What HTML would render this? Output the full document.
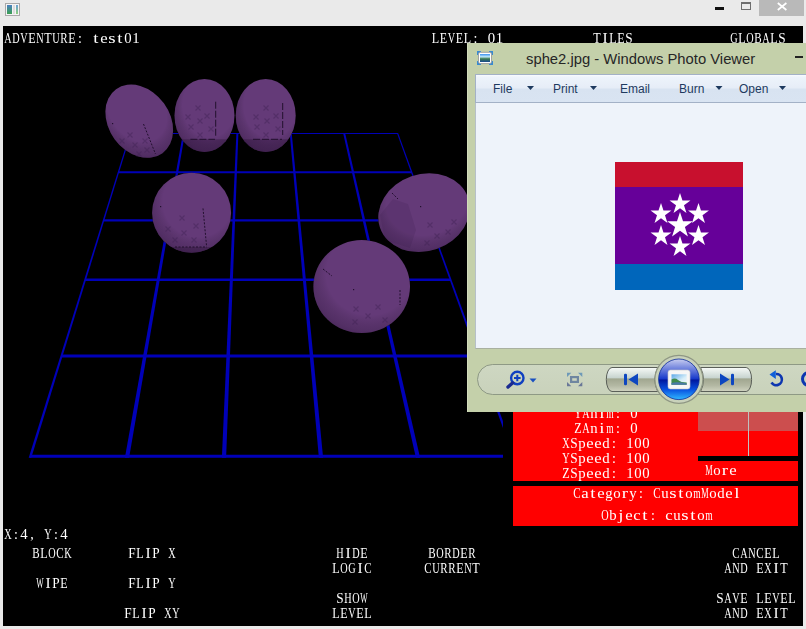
<!DOCTYPE html>
<html><head><meta charset="utf-8">
<style>
*{margin:0;padding:0;box-sizing:border-box}
html,body{width:806px;height:629px;overflow:hidden;background:#eaeaea;position:relative}
.a{position:absolute}
.m{position:absolute;font:13.333px/15px "Liberation Mono",monospace;color:#fff;white-space:pre}
.c{text-align:center}
.s{font-family:"Liberation Sans",sans-serif;white-space:pre;position:absolute}
</style></head><body>
<!-- title icon -->
<div class="a" style="left:5px;top:3px;width:15px;height:13px;border:1px solid #a9a9a9;background:#f4f4f4"></div>
<div class="a" style="left:7px;top:5px;width:5px;height:9px;background:linear-gradient(#4a7fc0,#3aa050)"></div>
<div class="a" style="left:13px;top:5px;width:2px;height:9px;background:#ddd"></div>
<div class="a" style="left:16px;top:5px;width:2px;height:9px;background:linear-gradient(#6aa0d8,#8cd07a)"></div>
<!-- controls -->
<div class="a" style="left:715px;top:7px;width:9px;height:3px;background:#111"></div>
<div class="a" style="left:741px;top:2px;width:10px;height:8px;border:1px solid #6e6e6e;border-top-width:2px"></div>
<div class="a" style="left:759px;top:0;width:45px;height:16px;background:#b9b9b9"></div>
<svg class="a" style="left:775px;top:0" width="14" height="14"><path d="M2.8 3 L11.4 10 M11.4 3 L2.8 10" stroke="#fff" stroke-width="1.7"/></svg>
<!-- client -->
<div class="a" style="left:3px;top:26px;width:800px;height:600px;background:#000"></div>
<svg class="a" style="left:0;top:0" width="806" height="629">
<defs>
<clipPath id="c2"><ellipse cx="204.5" cy="115.5" rx="30" ry="36.5"/></clipPath>
<clipPath id="c3"><ellipse cx="265.7" cy="115.5" rx="30" ry="36.5"/></clipPath>
<clipPath id="c4"><ellipse cx="191.6" cy="212.8" rx="39.5" ry="40"/></clipPath>
<clipPath id="vp"><rect x="3" y="26" width="500" height="600"/></clipPath>
<radialGradient id="sh" cx="0.58" cy="0.36" r="0.72">
<stop offset="0" stop-color="#000" stop-opacity="0"/><stop offset="0.62" stop-color="#000" stop-opacity="0"/><stop offset="0.85" stop-color="#1a0a25" stop-opacity="0.22"/><stop offset="1" stop-color="#1a0a25" stop-opacity="0.4"/>
</radialGradient>
</defs>
<g clip-path="url(#vp)">
<g fill="#0000b8">
<polygon points="130.8,133.0 397.3,133.0 397.7,134.0 130.4,134.0"/>
<polygon points="118.9,171.2 411.2,171.2 412.0,173.2 118.2,173.2"/>
<polygon points="103.9,219.2 428.7,219.2 429.5,221.4 103.2,221.4"/>
<polygon points="85.4,278.5 450.3,278.5 451.2,281.1 84.6,281.1"/>
<polygon points="61.7,354.6 478.0,354.6 479.1,357.6 60.8,357.6"/>
<polygon points="30.5,454.8 514.5,454.8 515.5,457.8 29.5,457.8"/>
<polygon points="130.0,133.0 131.2,133.0 31.3,457.8 28.7,457.8"/>
<polygon points="183.0,133.0 185.0,133.0 129.1,457.8 124.9,457.8"/>
<polygon points="236.4,133.0 238.4,133.0 226.1,457.8 221.9,457.8"/>
<polygon points="289.7,133.0 291.7,133.0 323.1,457.8 318.9,457.8"/>
<polygon points="343.1,133.0 345.1,133.0 420.1,457.8 415.9,457.8"/>
<polygon points="396.9,133.0 398.1,133.0 516.3,457.8 513.7,457.8"/>
</g>
<g id="sph">
<ellipse cx="139.25" cy="121.2" rx="30.5" ry="39.5" transform="rotate(-36 139.25 121.2)"/>
<ellipse cx="204.5" cy="115.5" rx="30" ry="36.5"/>
<ellipse cx="265.7" cy="115.5" rx="30" ry="36.5"/>
<ellipse cx="191.6" cy="212.8" rx="39.5" ry="40"/>
<ellipse cx="424" cy="212.7" rx="46.5" ry="38.5" transform="rotate(-19 424 212.7)"/>
<ellipse cx="361.7" cy="286.6" rx="48.3" ry="46.5"/>
</g>
<use href="#sph" fill="#643a78"/>
<g fill="#1e0a2a" opacity="0.3">
<rect x="170" y="139.3" width="70" height="20" clip-path="url(#c2)"/>
<rect x="232" y="139.3" width="70" height="20" clip-path="url(#c3)"/>
<rect x="150" y="247" width="90" height="10" clip-path="url(#c4)"/>
</g>
<use href="#sph" fill="url(#sh)"/>
<path d="M127.5 132.5L132.5 137.5M132.5 132.5L127.5 137.5 M119.5 138.5L124.5 143.5M124.5 138.5L119.5 143.5 M142.5 138.5L147.5 143.5M147.5 138.5L142.5 143.5 M132.5 142.5L137.5 147.5M137.5 142.5L132.5 147.5 M144.5 147.5L149.5 152.5M149.5 147.5L144.5 152.5 M136.5 151.5L141.5 156.5M141.5 151.5L136.5 156.5 M195.5 105.5L200.5 110.5M200.5 105.5L195.5 110.5 M185.5 114.5L190.5 119.5M190.5 114.5L185.5 119.5 M204.5 113.5L209.5 118.5M209.5 113.5L204.5 118.5 M197.5 118.5L202.5 123.5M202.5 118.5L197.5 123.5 M188.5 124.5L193.5 129.5M193.5 124.5L188.5 129.5 M208.5 126.5L213.5 131.5M213.5 126.5L208.5 131.5 M197.5 132.5L202.5 137.5M202.5 132.5L197.5 137.5 M263.5 105.5L268.5 110.5M268.5 105.5L263.5 110.5 M253.5 114.5L258.5 119.5M258.5 114.5L253.5 119.5 M273.5 113.5L278.5 118.5M278.5 113.5L273.5 118.5 M264.5 118.5L269.5 123.5M269.5 118.5L264.5 123.5 M254.5 124.5L259.5 129.5M259.5 124.5L254.5 129.5 M275.5 126.5L280.5 131.5M280.5 126.5L275.5 131.5 M263.5 132.5L268.5 137.5M268.5 132.5L263.5 137.5 M179.5 215.5L184.5 220.5M184.5 215.5L179.5 220.5 M165.5 226.5L170.5 231.5M170.5 226.5L165.5 231.5 M193.5 223.5L198.5 228.5M198.5 223.5L193.5 228.5 M181.5 230.5L186.5 235.5M186.5 230.5L181.5 235.5 M172.5 237.5L177.5 242.5M177.5 237.5L172.5 242.5 M191.5 237.5L196.5 242.5M196.5 237.5L191.5 242.5 M427.5 222.5L432.5 227.5M432.5 222.5L427.5 227.5 M451.5 219.5L456.5 224.5M456.5 219.5L451.5 224.5 M445.5 229.5L450.5 234.5M450.5 229.5L445.5 234.5 M434.5 233.5L439.5 238.5M439.5 233.5L434.5 238.5 M424.5 240.5L429.5 245.5M429.5 240.5L424.5 245.5 M353.5 306.5L358.5 311.5M358.5 306.5L353.5 311.5 M375.5 304.5L380.5 309.5M380.5 304.5L375.5 309.5 M365.5 313.5L370.5 318.5M370.5 313.5L365.5 318.5 M352.5 319.5L357.5 324.5M357.5 319.5L352.5 324.5 M382.5 317.5L387.5 322.5M387.5 317.5L382.5 322.5" stroke="#3c2050" stroke-width="1.1" opacity="0.4" fill="none"/>
<g stroke="#22102e" stroke-width="1" fill="none" stroke-dasharray="7 2">
<path d="M215.7 101.7V136M190.4 139.3H215"/>
<path d="M282.7 103V135M253 139.3H282"/>
</g>
<g stroke="#22102e" stroke-width="1" fill="none" stroke-dasharray="2 1.5">
<path d="M143.5 124L155.5 154"/>
<path d="M203 208.4L206.5 245.5M175 247H207"/>
<path d="M392 193L398 199"/>
<path d="M323 269L332 276M400 290V305"/>
</g>
<g fill="#22102e"><rect x="112" y="123" width="1.2" height="1.2"/><rect x="160" y="206" width="1.2" height="1.2"/><rect x="420" y="206" width="1.2" height="1.2"/><rect x="353" y="289" width="1.2" height="1.2"/></g>
<path d="M393 199 L408 204 L416 230 L410 248 L385 240 L380 215Z" fill="#2a1038" opacity="0.12"/>

</g>
</svg>
<!-- red panels -->
<div class="a" style="left:513px;top:380px;width:285px;height:101px;background:#f00"></div>
<div class="a" style="left:698px;top:380px;width:100px;height:51px;background:#cc4e4e"></div>
<div class="a" style="left:748px;top:380px;width:1px;height:76px;background:#c0c0c0"></div>
<div class="a" style="left:698px;top:456px;width:100px;height:5px;background:#000"></div>
<div class="a" style="left:513px;top:486px;width:285px;height:40px;background:#f00"></div>
<!-- texts -->
<svg class="a" style="left:0;top:0;will-change:transform" width="806" height="629"><g font-family="Liberation Serif" font-size="14.0" fill="#fff" text-anchor="middle"><text transform="translate(8 43) scale(0.732 1)">A</text><text transform="translate(16 43) scale(0.732 1)">D</text><text transform="translate(24 43) scale(0.732 1)">V</text><text transform="translate(32 43) scale(0.865 1)">E</text><text transform="translate(40 43) scale(0.732 1)">N</text><text transform="translate(48 43) scale(0.865 1)">T</text><text transform="translate(56 43) scale(0.732 1)">U</text><text transform="translate(64 43) scale(0.792 1)">R</text><text transform="translate(72 43) scale(0.865 1)">E</text><text x="80" y="43">:</text><text transform="translate(96 43) scale(1.350 1)">t</text><text transform="translate(104 43) scale(1.191 1)">e</text><text transform="translate(112 43) scale(1.350 1)">s</text><text transform="translate(120 43) scale(1.350 1)">t</text><text transform="translate(128 43) scale(1.057 1)">0</text><text transform="translate(136 43) scale(1.057 1)">1</text>
<text transform="translate(435.5 43) scale(0.865 1)">L</text><text transform="translate(443.5 43) scale(0.865 1)">E</text><text transform="translate(451.5 43) scale(0.732 1)">V</text><text transform="translate(459.5 43) scale(0.865 1)">E</text><text transform="translate(467.5 43) scale(0.865 1)">L</text><text x="475.5" y="43">:</text><text transform="translate(491.5 43) scale(1.057 1)">0</text><text transform="translate(499.5 43) scale(1.057 1)">1</text>
<text transform="translate(597 43) scale(0.865 1)">T</text><text transform="translate(605 43) scale(1.100 1)">I</text><text transform="translate(613 43) scale(0.865 1)">L</text><text transform="translate(621 43) scale(0.865 1)">E</text><text transform="translate(629 43) scale(0.950 1)">S</text>
<text transform="translate(734 43) scale(0.732 1)">G</text><text transform="translate(742 43) scale(0.865 1)">L</text><text transform="translate(750 43) scale(0.732 1)">O</text><text transform="translate(758 43) scale(0.792 1)">B</text><text transform="translate(766 43) scale(0.732 1)">A</text><text transform="translate(774 43) scale(0.865 1)">L</text><text transform="translate(782 43) scale(0.950 1)">S</text>
<text transform="translate(578 418) scale(0.732 1)">Y</text><text transform="translate(586 418) scale(0.732 1)">A</text><text transform="translate(594 418) scale(1.057 1)">n</text><text transform="translate(602 418) scale(1.350 1)">i</text><text transform="translate(610 418) scale(0.680 1)">m</text><text x="618" y="418">:</text><text transform="translate(634 418) scale(1.057 1)">0</text>
<text transform="translate(578 433) scale(0.865 1)">Z</text><text transform="translate(586 433) scale(0.732 1)">A</text><text transform="translate(594 433) scale(1.057 1)">n</text><text transform="translate(602 433) scale(1.350 1)">i</text><text transform="translate(610 433) scale(0.680 1)">m</text><text x="618" y="433">:</text><text transform="translate(634 433) scale(1.057 1)">0</text>
<text transform="translate(566 448) scale(0.732 1)">X</text><text transform="translate(574 448) scale(0.950 1)">S</text><text transform="translate(582 448) scale(1.057 1)">p</text><text transform="translate(590 448) scale(1.191 1)">e</text><text transform="translate(598 448) scale(1.191 1)">e</text><text transform="translate(606 448) scale(1.057 1)">d</text><text x="614" y="448">:</text><text transform="translate(630 448) scale(1.057 1)">1</text><text transform="translate(638 448) scale(1.057 1)">0</text><text transform="translate(646 448) scale(1.057 1)">0</text>
<text transform="translate(566 463) scale(0.732 1)">Y</text><text transform="translate(574 463) scale(0.950 1)">S</text><text transform="translate(582 463) scale(1.057 1)">p</text><text transform="translate(590 463) scale(1.191 1)">e</text><text transform="translate(598 463) scale(1.191 1)">e</text><text transform="translate(606 463) scale(1.057 1)">d</text><text x="614" y="463">:</text><text transform="translate(630 463) scale(1.057 1)">1</text><text transform="translate(638 463) scale(1.057 1)">0</text><text transform="translate(646 463) scale(1.057 1)">0</text>
<text transform="translate(566 478) scale(0.865 1)">Z</text><text transform="translate(574 478) scale(0.950 1)">S</text><text transform="translate(582 478) scale(1.057 1)">p</text><text transform="translate(590 478) scale(1.191 1)">e</text><text transform="translate(598 478) scale(1.191 1)">e</text><text transform="translate(606 478) scale(1.057 1)">d</text><text x="614" y="478">:</text><text transform="translate(630 478) scale(1.057 1)">1</text><text transform="translate(638 478) scale(1.057 1)">0</text><text transform="translate(646 478) scale(1.057 1)">0</text>
<text transform="translate(709 475) scale(0.594 1)">M</text><text transform="translate(717 475) scale(1.057 1)">o</text><text transform="translate(725 475) scale(1.350 1)">r</text><text transform="translate(733 475) scale(1.191 1)">e</text>
<text transform="translate(577 498) scale(0.792 1)">C</text><text transform="translate(585 498) scale(1.191 1)">a</text><text transform="translate(593 498) scale(1.350 1)">t</text><text transform="translate(601 498) scale(1.191 1)">e</text><text transform="translate(609 498) scale(1.057 1)">g</text><text transform="translate(617 498) scale(1.057 1)">o</text><text transform="translate(625 498) scale(1.350 1)">r</text><text transform="translate(633 498) scale(1.057 1)">y</text><text x="641" y="498">:</text><text transform="translate(657 498) scale(0.792 1)">C</text><text transform="translate(665 498) scale(1.057 1)">u</text><text transform="translate(673 498) scale(1.350 1)">s</text><text transform="translate(681 498) scale(1.350 1)">t</text><text transform="translate(689 498) scale(1.057 1)">o</text><text transform="translate(697 498) scale(0.680 1)">m</text><text transform="translate(705 498) scale(0.594 1)">M</text><text transform="translate(713 498) scale(1.057 1)">o</text><text transform="translate(721 498) scale(1.057 1)">d</text><text transform="translate(729 498) scale(1.191 1)">e</text><text transform="translate(737 498) scale(1.350 1)">l</text>
<text transform="translate(605 520) scale(0.732 1)">O</text><text transform="translate(613 520) scale(1.057 1)">b</text><text transform="translate(621 520) scale(1.350 1)">j</text><text transform="translate(629 520) scale(1.191 1)">e</text><text transform="translate(637 520) scale(1.191 1)">c</text><text transform="translate(645 520) scale(1.350 1)">t</text><text x="653" y="520">:</text><text transform="translate(669 520) scale(1.191 1)">c</text><text transform="translate(677 520) scale(1.057 1)">u</text><text transform="translate(685 520) scale(1.350 1)">s</text><text transform="translate(693 520) scale(1.350 1)">t</text><text transform="translate(701 520) scale(1.057 1)">o</text><text transform="translate(709 520) scale(0.680 1)">m</text>
<text transform="translate(8 539) scale(0.732 1)">X</text><text x="16" y="539">:</text><text transform="translate(24 539) scale(1.057 1)">4</text><text x="32" y="539">,</text><text transform="translate(48 539) scale(0.732 1)">Y</text><text x="56" y="539">:</text><text transform="translate(64 539) scale(1.057 1)">4</text>
<text transform="translate(36 558) scale(0.792 1)">B</text><text transform="translate(44 558) scale(0.865 1)">L</text><text transform="translate(52 558) scale(0.732 1)">O</text><text transform="translate(60 558) scale(0.792 1)">C</text><text transform="translate(68 558) scale(0.732 1)">K</text>
<text transform="translate(40 588) scale(0.560 1)">W</text><text transform="translate(48 588) scale(1.100 1)">I</text><text transform="translate(56 588) scale(0.950 1)">P</text><text transform="translate(64 588) scale(0.865 1)">E</text>
<text transform="translate(132 558) scale(0.950 1)">F</text><text transform="translate(140 558) scale(0.865 1)">L</text><text transform="translate(148 558) scale(1.100 1)">I</text><text transform="translate(156 558) scale(0.950 1)">P</text><text transform="translate(172 558) scale(0.732 1)">X</text>
<text transform="translate(132 588) scale(0.950 1)">F</text><text transform="translate(140 588) scale(0.865 1)">L</text><text transform="translate(148 588) scale(1.100 1)">I</text><text transform="translate(156 588) scale(0.950 1)">P</text><text transform="translate(172 588) scale(0.732 1)">Y</text>
<text transform="translate(128 618) scale(0.950 1)">F</text><text transform="translate(136 618) scale(0.865 1)">L</text><text transform="translate(144 618) scale(1.100 1)">I</text><text transform="translate(152 618) scale(0.950 1)">P</text><text transform="translate(168 618) scale(0.732 1)">X</text><text transform="translate(176 618) scale(0.732 1)">Y</text>
<text transform="translate(340 558) scale(0.732 1)">H</text><text transform="translate(348 558) scale(1.100 1)">I</text><text transform="translate(356 558) scale(0.732 1)">D</text><text transform="translate(364 558) scale(0.865 1)">E</text>
<text transform="translate(336 573) scale(0.865 1)">L</text><text transform="translate(344 573) scale(0.732 1)">O</text><text transform="translate(352 573) scale(0.732 1)">G</text><text transform="translate(360 573) scale(1.100 1)">I</text><text transform="translate(368 573) scale(0.792 1)">C</text>
<text transform="translate(340 603) scale(0.950 1)">S</text><text transform="translate(348 603) scale(0.732 1)">H</text><text transform="translate(356 603) scale(0.732 1)">O</text><text transform="translate(364 603) scale(0.560 1)">W</text>
<text transform="translate(336 618) scale(0.865 1)">L</text><text transform="translate(344 618) scale(0.865 1)">E</text><text transform="translate(352 618) scale(0.732 1)">V</text><text transform="translate(360 618) scale(0.865 1)">E</text><text transform="translate(368 618) scale(0.865 1)">L</text>
<text transform="translate(432 558) scale(0.792 1)">B</text><text transform="translate(440 558) scale(0.732 1)">O</text><text transform="translate(448 558) scale(0.792 1)">R</text><text transform="translate(456 558) scale(0.732 1)">D</text><text transform="translate(464 558) scale(0.865 1)">E</text><text transform="translate(472 558) scale(0.792 1)">R</text>
<text transform="translate(428 573) scale(0.792 1)">C</text><text transform="translate(436 573) scale(0.732 1)">U</text><text transform="translate(444 573) scale(0.792 1)">R</text><text transform="translate(452 573) scale(0.792 1)">R</text><text transform="translate(460 573) scale(0.865 1)">E</text><text transform="translate(468 573) scale(0.732 1)">N</text><text transform="translate(476 573) scale(0.865 1)">T</text>
<text transform="translate(736 558) scale(0.792 1)">C</text><text transform="translate(744 558) scale(0.732 1)">A</text><text transform="translate(752 558) scale(0.732 1)">N</text><text transform="translate(760 558) scale(0.792 1)">C</text><text transform="translate(768 558) scale(0.865 1)">E</text><text transform="translate(776 558) scale(0.865 1)">L</text>
<text transform="translate(728 573) scale(0.732 1)">A</text><text transform="translate(736 573) scale(0.732 1)">N</text><text transform="translate(744 573) scale(0.732 1)">D</text><text transform="translate(760 573) scale(0.865 1)">E</text><text transform="translate(768 573) scale(0.732 1)">X</text><text transform="translate(776 573) scale(1.100 1)">I</text><text transform="translate(784 573) scale(0.865 1)">T</text>
<text transform="translate(720 603) scale(0.950 1)">S</text><text transform="translate(728 603) scale(0.732 1)">A</text><text transform="translate(736 603) scale(0.732 1)">V</text><text transform="translate(744 603) scale(0.865 1)">E</text><text transform="translate(760 603) scale(0.865 1)">L</text><text transform="translate(768 603) scale(0.865 1)">E</text><text transform="translate(776 603) scale(0.732 1)">V</text><text transform="translate(784 603) scale(0.865 1)">E</text><text transform="translate(792 603) scale(0.865 1)">L</text>
<text transform="translate(728 618) scale(0.732 1)">A</text><text transform="translate(736 618) scale(0.732 1)">N</text><text transform="translate(744 618) scale(0.732 1)">D</text><text transform="translate(760 618) scale(0.865 1)">E</text><text transform="translate(768 618) scale(0.732 1)">X</text><text transform="translate(776 618) scale(1.100 1)">I</text><text transform="translate(784 618) scale(0.865 1)">T</text></g></svg>
<!-- photo viewer -->
<div class="a" style="left:467px;top:43px;width:350px;height:369px;background:#c4d0aa"></div>
<div class="a" style="left:467px;top:43px;width:1px;height:369px;background:#d2dcbc"></div>
<svg class="a" style="left:476px;top:50px" width="18" height="16">
<defs><linearGradient id="ic" x1="0" y1="0" x2="0" y2="1"><stop offset="0" stop-color="#3a90f0"/><stop offset="0.35" stop-color="#c0e8f8"/><stop offset="0.6" stop-color="#3a7a50"/><stop offset="1" stop-color="#1a4a90"/></linearGradient></defs>
<g fill="#3a8ad0"><rect x="1" y="1" width="4" height="4"/><rect x="13" y="1" width="4" height="4"/><rect x="1" y="11" width="4" height="4"/><rect x="13" y="11" width="4" height="4"/></g>
<rect x="2.5" y="2.3" width="13" height="11.3" rx="1.8" fill="#fff" stroke="#9a9a9a" stroke-width="0.9"/>
<rect x="4" y="4" width="10" height="8" fill="url(#ic)"/>
</svg>
<div class="s" style="left:526px;top:49px;font-size:14.8px;line-height:20px;color:#262626">sphe2.jpg - Windows Photo Viewer</div>
<div class="a" style="left:795px;top:56px;width:8px;height:2px;background:#222"></div>
<div class="a" style="left:475px;top:74px;width:340px;height:29px;border:1px solid #a8b4c6;border-right:none;background:linear-gradient(#f8fbfe 0%,#edf3fb 8%,#e6edf7 48%,#d8e3f1 52%,#d9e4f2 100%);border-color:#a3b1c6"></div>
<div class="s" style="left:493px;top:81px;font-size:12px;line-height:16px;color:#1e3a5f">File</div>
<div class="s" style="left:553px;top:81px;font-size:12px;line-height:16px;color:#1e3a5f">Print</div>
<div class="s" style="left:620px;top:81px;font-size:12px;line-height:16px;color:#1e3a5f">Email</div>
<div class="s" style="left:679px;top:81px;font-size:12px;line-height:16px;color:#1e3a5f">Burn</div>
<div class="s" style="left:739px;top:81px;font-size:12px;line-height:16px;color:#1e3a5f">Open</div>
<svg class="a" style="left:0;top:0" width="806" height="629">
<g fill="#1e3a5f"><path d="M527 86h7l-3.5 4z"/><path d="M590 86h7l-3.5 4z"/><path d="M715.5 86h7l-3.5 4z"/><path d="M779 86h7l-3.5 4z"/></g>
</svg>
<div class="a" style="left:475px;top:103px;width:340px;height:246px;background:#eef3fa;border-left:1px solid #b6c0c8;border-bottom:1px solid #a9b0a0"></div>
<svg class="a" style="left:615px;top:162px" width="128" height="128" viewBox="0 0 128 128">
<rect width="128" height="25" fill="#c8102e"/><rect y="25" width="128" height="77" fill="#660099"/><rect y="102" width="128" height="26" fill="#0066bb"/>
<defs><path id="st" d="M0,-1 L0.2245,-0.309 L0.951,-0.309 L0.363,0.118 L0.588,0.809 L0,0.382 L-0.588,0.809 L-0.363,0.118 L-0.951,-0.309 L-0.2245,-0.309Z"/></defs>
<g fill="#fff">
<use href="#st" transform="translate(65,63.5) scale(13.5)"/>
<use href="#st" transform="translate(65,42) scale(11)"/>
<use href="#st" transform="translate(83.5,52) scale(11)"/>
<use href="#st" transform="translate(83.5,74) scale(11)"/>
<use href="#st" transform="translate(65,85) scale(11)"/>
<use href="#st" transform="translate(46,74) scale(11)"/>
<use href="#st" transform="translate(46,52) scale(11)"/>
</g>
</svg>
<!-- bottom bar -->
<div class="a" style="left:477px;top:364px;width:360px;height:31px;border:1px solid #8e9985;border-radius:16px;background:linear-gradient(#ced7c2,#c9d2bb)"></div>
<svg class="a" style="left:0;top:0" width="806" height="629">
<defs>
<linearGradient id="bg1" x1="0" y1="0" x2="0" y2="1"><stop offset="0" stop-color="#fafcfa"/><stop offset="0.08" stop-color="#eef3f0"/><stop offset="0.44" stop-color="#c6d3ce"/><stop offset="0.47" stop-color="#a0a68f"/><stop offset="0.75" stop-color="#b3b8a3"/><stop offset="1" stop-color="#cfd3c0"/></linearGradient>
<linearGradient id="bl" x1="0" y1="0" x2="0" y2="1"><stop offset="0" stop-color="#c8cdf0"/><stop offset="0.2" stop-color="#7d8ee0"/><stop offset="0.48" stop-color="#1a3ccc"/><stop offset="0.52" stop-color="#0018a0"/><stop offset="0.75" stop-color="#0850e0"/><stop offset="1" stop-color="#30b8ff"/></linearGradient>
<linearGradient id="sky" x1="0" y1="0" x2="1" y2="1"><stop offset="0" stop-color="#5aa8e8"/><stop offset="0.6" stop-color="#d8eef8"/><stop offset="1" stop-color="#f0f8fc"/></linearGradient>
<linearGradient id="ph" x1="0" y1="0" x2="0" y2="1"><stop offset="0" stop-color="#3a8ee8"/><stop offset="0.35" stop-color="#bfe6f8"/><stop offset="0.55" stop-color="#5a9a60"/><stop offset="0.8" stop-color="#2a6a50"/><stop offset="1" stop-color="#2a60a0"/></linearGradient>
</defs>
<path d="M612 367.5 H657.7 A28 28 0 0 0 657.7 391.5 H612 A5.7 12 0 0 1 612 367.5Z" fill="url(#bg1)" stroke="#5a5f58" stroke-width="1"/>
<path d="M700.6 367.5 H746.2 A5.4 12 0 0 1 746.2 391.5 H700.6 A28 28 0 0 0 700.6 367.5Z" fill="url(#bg1)" stroke="#5a5f58" stroke-width="1"/>
<circle cx="678.9" cy="379.3" r="24" fill="#c9d2bb" stroke="#8f9784" stroke-width="1.2"/>
<circle cx="678.9" cy="379.3" r="20.3" fill="url(#bl)" stroke="#0a2a9a" stroke-width="0.8"/>
<rect x="668" y="370" width="22" height="19" rx="2.5" fill="#f6f6f6" stroke="#c8c8c8" stroke-width="0.6"/>
<rect x="671.5" y="374.3" width="15.2" height="10.5" fill="url(#sky)"/>
<path d="M671.5 379.5 Q675 377.5 678 380 T686.7 382.5 V384.8 H671.5Z" fill="#3f8a4a"/>
<path d="M671.5 383 Q678 381.5 686.7 383.5 V384.8 H671.5Z" fill="#4a78a8"/>
<g fill="#0d46c0">
<rect x="624" y="373.8" width="3" height="11.4" rx="1.3"/><path d="M638 373.5 V385.5 L628.5 379.5Z"/>
<rect x="731" y="373.8" width="3" height="11.4" rx="1.3"/><path d="M720 373.5 V385.5 L729.5 379.5Z"/>
</g>
<path d="M771.5 382.5 A5.6 5.6 0 1 0 776 374" fill="none" stroke="#0d36b0" stroke-width="2.6"/>
<path d="M769.5 374.5 L775.8 370.3 L775.8 379Z" fill="#1060d8"/>
<circle cx="517.3" cy="378" r="6.2" fill="none" stroke="#1040c0" stroke-width="2.4"/>
<path d="M514 378h6.6M517.3 374.7v6.6" stroke="#1040c0" stroke-width="2"/>
<path d="M512.5 383 L508 387" stroke="#1a2a90" stroke-width="3.4" stroke-linecap="round"/>
<path d="M529.5 378.5h7l-3.5 4z" fill="#1a50c0"/>
<rect x="571.1" y="377.1" width="6.8" height="4.8" fill="none" stroke="#6f86a0" stroke-width="2.2"/>
<path d="M567 372.8h4.3l-4.3 4.3z M582.3 372.8h-4.3l4.3 4.3z" fill="#6f9ab8"/><path d="M567 386.3h4.3l-4.3-4.3z M582.3 386.3h-4.3l4.3-4.3z" fill="#6a7898"/>
<circle cx="809" cy="379" r="6.5" fill="none" stroke="#0d36b0" stroke-width="3"/>
</svg>
</body></html>
